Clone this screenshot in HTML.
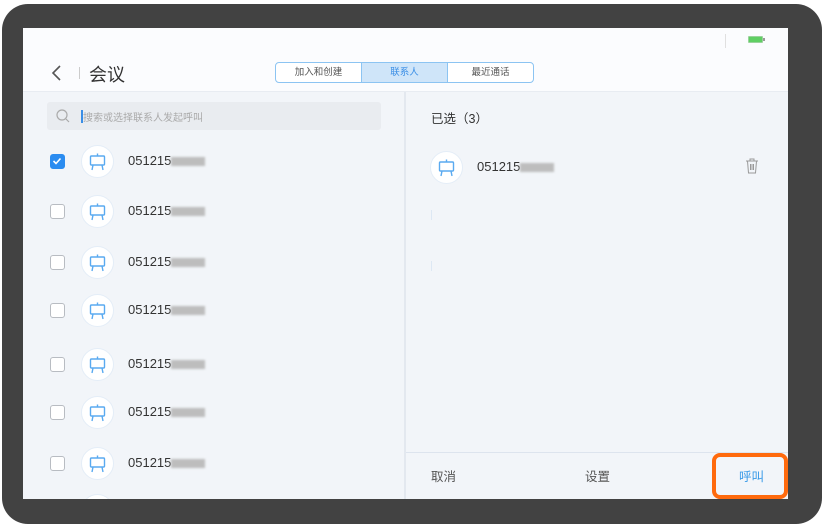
<!DOCTYPE html>
<html><head><meta charset="utf-8"><style>
*{margin:0;padding:0;box-sizing:border-box}
body{width:826px;height:528px;background:#fff;position:relative;overflow:hidden;font-family:"Liberation Sans","Noto Sans CJK SC",sans-serif}
.a{position:absolute}
.frame{left:2px;top:4px;width:820px;height:520px;background:#424242;border-radius:26px}
.screen{left:23px;top:28px;width:765px;height:471px;background:#f2f5f9;overflow:hidden}
.hdr{left:0;top:0;width:765px;height:64px;background:#fbfcfe;border-bottom:1px solid #e8ecf2}
.cb{width:15px;height:15px;border:1.5px solid #b8bcc2;border-radius:3px;background:#fff}
.cb.on{background:#2b8cf0;border-color:#2b8cf0}
.av{width:33px;height:33px;border-radius:50%;background:#fff;border:1px solid #e4edf7}
.num{font-size:13px;color:#333}
.blur{display:inline-block;width:34px;height:9px;background:#bdbdbd;filter:blur(1px);vertical-align:-1px}
</style></head><body>
<div class="a frame"></div>
<div class="a screen">
 <div class="a hdr">
  <div class="a" style="left:702px;top:6px;width:1px;height:14px;background:#e0e0e0"></div>
  <div class="a" style="left:725px;top:8px;width:15px;height:7px;background:#5fcf63;border:1px solid #9ad29c;border-radius:1px"></div>
  <div class="a" style="left:740px;top:10px;width:2px;height:3px;background:#999"></div>
  <svg class="a" style="left:28px;top:37px" width="12" height="16"><path d="M9 1 L2 8 L9 15" fill="none" stroke="#555" stroke-width="1.6"/></svg>
  <div class="a" style="left:56px;top:39px;width:1px;height:12px;background:#ccc"></div>
  <div class="a" style="left:66px;top:33px;font-size:18px;color:#333">会议</div>
  <div class="a" style="left:252px;top:34px;width:259px;height:21px;border:1px solid #8cc4f2;border-radius:4px;overflow:hidden;font-size:9.5px;display:flex;background:#fff">
   <div style="width:86px;text-align:center;line-height:19px;color:#555;border-right:1px solid #8cc4f2">加入和创建</div>
   <div style="width:86px;text-align:center;line-height:19px;color:#3a8ee6;background:#cfe5f9;border-right:1px solid #8cc4f2">联系人</div>
   <div style="flex:1;text-align:center;line-height:19px;color:#555">最近通话</div>
  </div>
 </div>
 <div class="a" style="left:381px;top:64px;width:2px;height:407px;background:#e3e8ef"></div>
 <div class="a" style="left:24px;top:74px;width:334px;height:28px;background:#e9ecf0;border-radius:3px">
  <svg class="a" style="left:9px;top:7px" width="14" height="14"><circle cx="6" cy="6" r="5" fill="none" stroke="#aaa" stroke-width="1.2"/><path d="M10 10 L13 13" stroke="#aaa" stroke-width="1.2"/></svg>
  <div class="a" style="left:34px;top:8px;width:1.5px;height:13px;background:#3a8ee6"></div>
  <div class="a" style="left:36px;top:7px;font-size:10px;color:#aaa">搜索或选择联系人发起呼叫</div>
 </div>
 <div id="rows"></div>
 <div class="a" style="left:408px;top:80px;font-size:12.5px;color:#333">已选（3）</div>
 <div class="a av" style="left:407px;top:123px"></div>
 <div class="a num" style="left:454px;top:131px">051215<span class="blur"></span></div>
 <svg class="a" style="left:722px;top:130px" width="14" height="16"><path d="M1 3 H13 M5 3 V1 H9 V3 M2.5 3 L3.5 15 H10.5 L11.5 3 M5.5 6 V12 M7 6 V12 M8.5 6 V12" fill="none" stroke="#999" stroke-width="1"/></svg>
 <div class="a" style="left:408px;top:182px;width:1px;height:10px;background:#dde8f4"></div>
 <div class="a" style="left:408px;top:233px;width:1px;height:10px;background:#dde8f4"></div>
 <div class="a" style="left:383px;top:424px;width:382px;height:1px;background:#dde4ee"></div>
 <div class="a" style="left:408px;top:438px;font-size:12.5px;color:#555">取消</div>
 <div class="a" style="left:562px;top:438px;font-size:12.5px;color:#555">设置</div>
 <div class="a" style="left:716px;top:438px;font-size:12.5px;color:#3a9be8">呼叫</div>
 <div class="a" style="left:689px;top:425px;width:76px;height:46px;border:4px solid #ff6a0d;border-radius:8px"></div>
</div>
<script>
var IC='<svg width="31" height="31"><rect x="8.5" y="10" width="14" height="9" fill="none" stroke="#5aaaf0" stroke-width="1.4" rx="1"/><path d="M15.5 7.5 V10 M11 19 L10 24 M20 19 L21 24" stroke="#5aaaf0" stroke-width="1.4" fill="none"/></svg>';
var ys=[161,211,262,310,364,412,463,510],h='';
ys.forEach(function(y,i){var t=y-28;
h+='<div class="a cb'+(i==0?' on':'')+'" style="left:27px;top:'+(t-7)+'px">'+(i==0?'<svg width="12" height="12" style="position:absolute;left:0;top:0"><path d="M2.5 6 L5 8.5 L9.5 3.5" fill="none" stroke="#fff" stroke-width="1.6"/></svg>':'')+'</div>';
h+='<div class="a av" style="left:58px;top:'+(t-16)+'px">'+IC+'</div>';
if(i<7)h+='<div class="a num" style="left:105px;top:'+(t-8)+'px">051215<span class="blur"></span></div>';});
document.getElementById('rows').outerHTML=h;
document.querySelectorAll('.av').forEach(function(e){if(!e.innerHTML)e.innerHTML=IC;});
</script>
</body></html>
